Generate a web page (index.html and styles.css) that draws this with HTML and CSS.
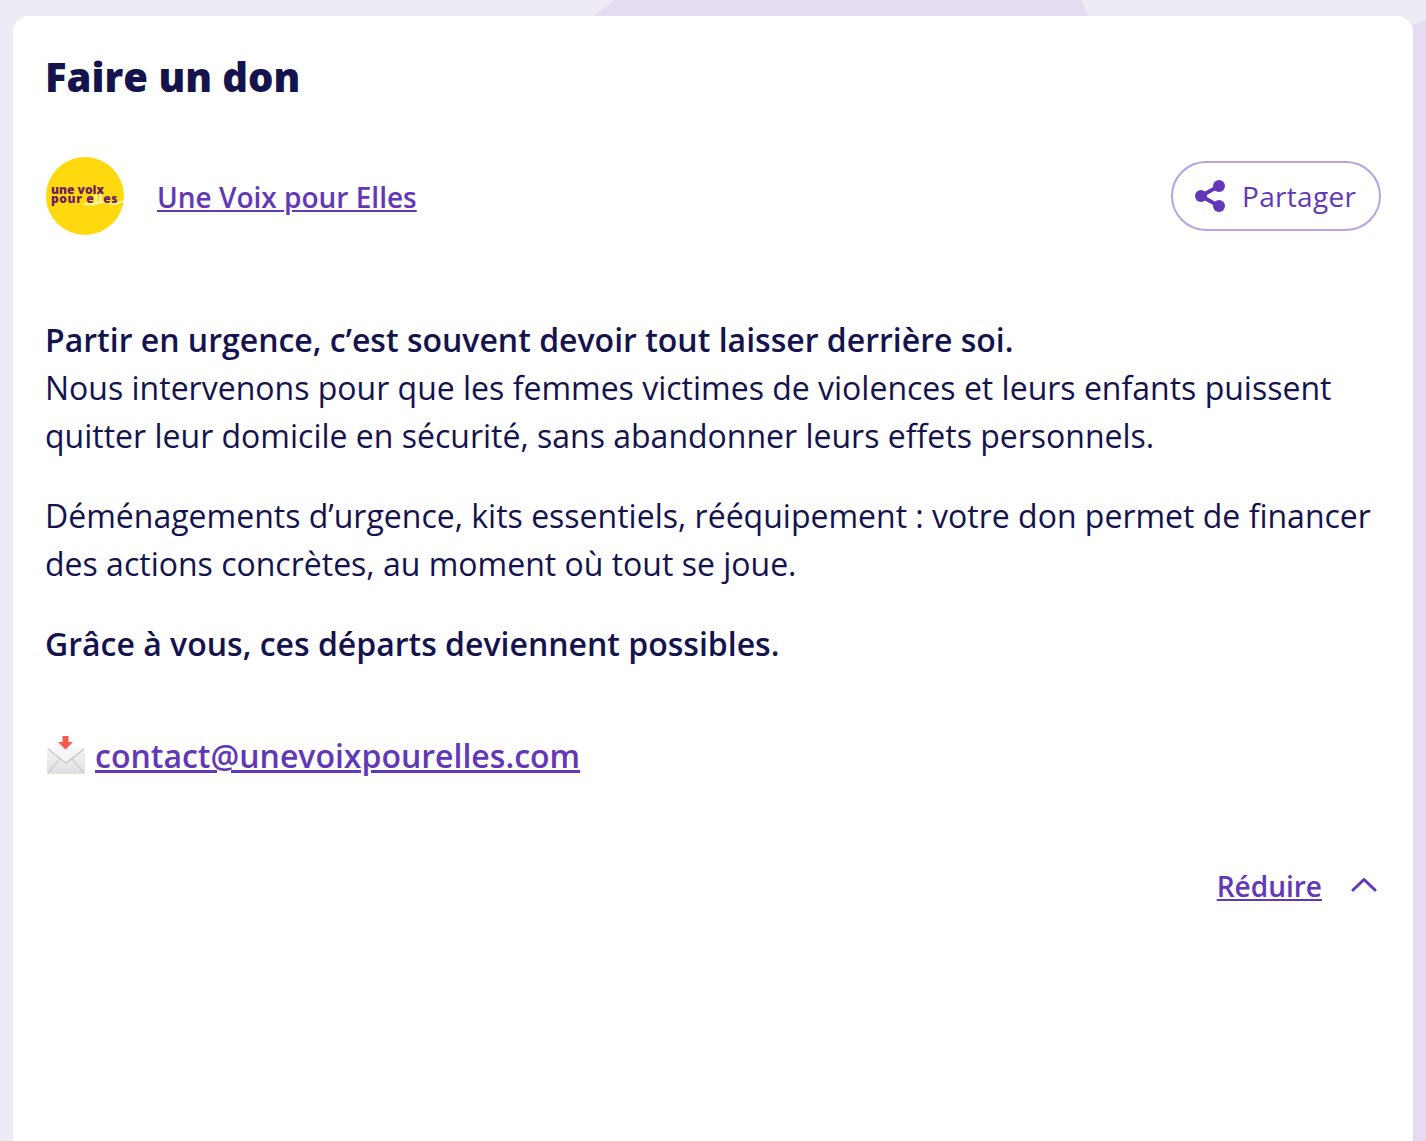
FILE: index.html
```html
<!DOCTYPE html>
<html lang="fr">
<head>
<meta charset="utf-8">
<title>Faire un don</title>
<link rel="stylesheet" href="styles.css">
</head>
<body>
<svg class="backdrop" width="1426" height="1141" viewBox="0 0 1426 1141" aria-hidden="true">
  <path class="shape" d="M614 0H1082L1088 16H594Z"/>
  <path class="shape" d="M1426 20L1410 26V1141H1426Z"/>
</svg>
<main class="card">
  <h1 class="title">Faire un don</h1>
  <div class="org-row">
    <div class="org">
      <div class="logo">
        <svg class="logo-swoosh" width="40" height="10" viewBox="0 0 40 10" aria-hidden="true">
          <path d="M1 8Q8 9 14 7T26 7T39 5"/>
        </svg>
        <span class="logo-line">une voix</span>
        <span class="logo-line logo-line-wide">pour e<span class="logo-ll">ll</span>es</span>
      </div>
      <a class="org-link" href="#">Une Voix pour Elles</a>
    </div>
    <button class="share" type="button">
      <svg class="share-icon" width="30" height="32" viewBox="0 0 30 32" aria-hidden="true">
        <path class="share-line" d="M24 6L6 16L24 26"/>
        <circle class="share-dot" cx="24" cy="6" r="6"/>
        <circle class="share-dot" cx="6" cy="16" r="6"/>
        <circle class="share-dot" cx="24" cy="26" r="6"/>
      </svg>
      <span>Partager</span>
    </button>
  </div>
  <div class="body-text">
    <p><strong>Partir en urgence, c’est souvent devoir tout laisser derrière soi.</strong><br>Nous intervenons pour que les femmes victimes de violences et leurs enfants puissent quitter leur domicile en sécurité, sans abandonner leurs effets personnels.</p>
    <p>Déménagements d’urgence, kits essentiels, rééquipement : votre don permet de financer des actions concrètes, au moment où tout se joue.</p>
    <p><strong>Grâce à vous, ces départs deviennent possibles.</strong></p>
    <p class="contact">
      <svg class="mail-icon" width="42" height="42" viewBox="0 0 42 42" aria-hidden="true">
        <defs>
          <linearGradient id="mail-fill" x1="0" y1="0" x2="0" y2="1">
            <stop offset="0" stop-color="#f4f4f5"/>
            <stop offset="1" stop-color="#dfdfe2"/>
          </linearGradient>
        </defs>
        <path class="mail-body" d="M1 17Q1 15 3 15H37Q39 15 39 17V39Q39 41 37 41H3Q1 41 1 39Z"/>
        <path class="mail-flap" d="M2 16L20 30L38 16"/>
        <path class="mail-fold" d="M2 40L14 25.500M38 40L26 25.500"/>
        <path class="mail-arrow" d="M16.500 3H22.500V9H27L19.500 16.500L12 9H16.500Z"/>
      </svg>
      <a class="contact-link" href="#">contact@unevoixpourelles.com</a>
    </p>
  </div>
  <div class="collapse-row">
    <a class="collapse-link" href="#">Réduire</a>
    <svg class="chevron" width="28" height="16" viewBox="0 0 28 16" aria-hidden="true">
      <path d="M3 14L14 3.500L25 14"/>
    </svg>
  </div>
</main>
</body>
</html>
```
FILE: styles.css
```css
* { box-sizing: border-box; }
html, body { margin: 0; height: 100%; }
body {
  background: #eeebf7;
  font-family: "Open Sans", "Noto Sans", sans-serif;
  color: #14134d;
  padding: 16px 13px 0;
  overflow: hidden;
  position: relative;
}
.backdrop { position: absolute; left: 0; top: 0; }
.shape { fill: #e5dcf1; }
.card {
  position: relative;
  background: #fff;
  border-radius: 16px 16px 0 0;
  height: 1125px;
  padding: 33px 32px 0 33px;
}
.title {
  margin: 0 0 0 -1px;
  font-size: 40px;
  line-height: 56px;
  font-weight: 800;
}
.org-row {
  display: flex;
  justify-content: space-between;
  align-items: center;
  margin-top: 52px;
}
.org { display: flex; align-items: center; gap: 33px; }
.logo {
  position: relative;
  width: 78px;
  height: 78px;
  border-radius: 50%;
  background: #ffd910;
  display: flex;
  flex-direction: column;
  justify-content: center;
  padding: 0 0 4px 5px;
  color: #6b1f5c;
  font-family: "Open Sans", sans-serif;
  font-weight: 800;
  font-size: 12px;
  line-height: 9px;
}
.logo-line { display: block; white-space: nowrap; position: relative; }
.logo-line-wide { letter-spacing: 0.6px; }
.logo-ll { color: #fff6b0; }
.logo-swoosh { position: absolute; left: 38px; top: 39px; }
.logo-swoosh path { fill: none; stroke: #fff6b0; stroke-width: 2; stroke-linecap: round; }
.org-link, .contact-link, .collapse-link { color: #6238b8; text-decoration: underline; }
.org-link { font-size: 28px; line-height: 38px; font-weight: 600; margin-top: 2px; }
.share {
  display: flex;
  align-items: center;
  gap: 17px;
  width: 210px;
  height: 70px;
  padding: 0 0 0 22px;
  background: #fff;
  border: 2px solid #b7a1e1;
  border-radius: 35px;
  color: #6238b8;
  font: 500 28px "Open Sans", sans-serif;
  letter-spacing: 0.3px;
}
.share-icon { flex: none; }
.share-line { fill: none; stroke: #6238b8; stroke-width: 4; }
.share-dot { fill: #6238b8; }
.body-text {
  margin-top: 81px;
  font-size: 32px;
  line-height: 48px;
  margin-left: -1px;
}
.body-text p { margin: 0 0 32px; }
.body-text strong { font-weight: 600; }
.body-text .contact { margin-top: 64px; display: flex; align-items: center; gap: 7px; font-weight: 600; }
.mail-icon { flex: none; margin: -4px 0 0 1px; }
.mail-body { fill: url(#mail-fill); }
.mail-flap { fill: #f6f6f7; stroke: #c9c9cd; stroke-width: 1.500; }
.mail-fold { fill: none; stroke: #cfcfd3; stroke-width: 1.500; }
.mail-arrow { fill: #f6594e; }
.collapse-row {
  display: flex;
  justify-content: flex-end;
  align-items: center;
  gap: 28px;
  margin-top: 87px;
  padding-right: 3px;
}
.collapse-link { font-size: 28px; line-height: 38px; font-weight: 600; }
.chevron { flex: none; margin-top: -4px; }
.chevron path { fill: none; stroke: #6238b8; stroke-width: 3; stroke-linecap: round; stroke-linejoin: round; }
```
